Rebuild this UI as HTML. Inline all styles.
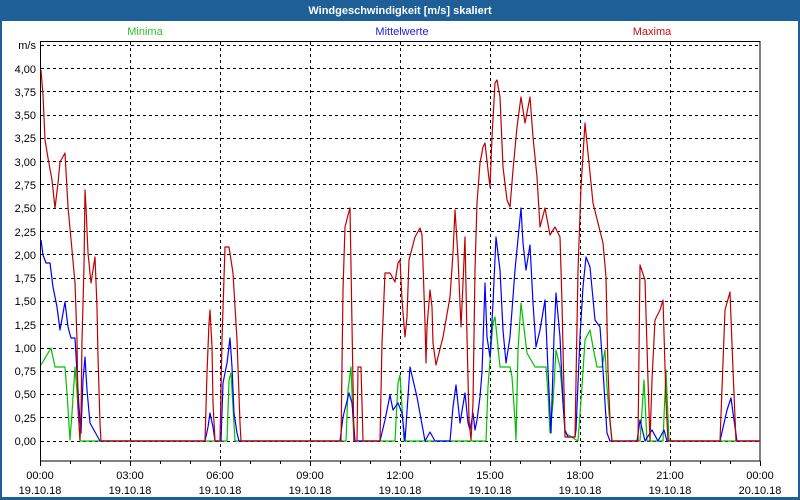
<!DOCTYPE html>
<html><head><meta charset="utf-8"><style>
html,body{margin:0;padding:0;width:800px;height:500px;overflow:hidden;background:#fff;}
svg{display:block}
text{font-family:"Liberation Sans",sans-serif;font-size:11px;}
</style></head><body>
<svg width="800" height="500" viewBox="0 0 800 500">
<rect x="0" y="0" width="800" height="500" fill="#1e5f97"/>
<rect x="2" y="21" width="796" height="476" fill="#fff"/>
<text x="400" y="14" fill="#fff" font-weight="bold" text-anchor="middle" style="font-size:11px">Windgeschwindigkeit [m/s] skaliert</text>
<text x="145" y="35" fill="#2ec02e" text-anchor="middle">Minima</text>
<text x="402" y="35" fill="#2020e0" text-anchor="middle">Mittelwerte</text>
<text x="652" y="35" fill="#c01010" text-anchor="middle">Maxima</text>
<g stroke="#000" stroke-width="1" stroke-dasharray="3,3" fill="none">
<path d="M41 45.5H760M41 68.5H760M41 91.5H760M41 115.5H760M41 138.5H760M41 161.5H760M41 184.5H760M41 208.5H760M41 231.5H760M41 254.5H760M41 278.5H760M41 301.5H760M41 324.5H760M41 348.5H760M41 371.5H760M41 394.5H760M41 417.5H760M41 441.5H760"/>
<path d="M130.5 42V461M220.5 42V461M310.5 42V461M400.5 42V461M490.5 42V461M580.5 42V461M670.5 42V461"/>
</g>
<rect x="40.5" y="41.5" width="719.5" height="419.5" fill="none" stroke="#000"/>
<g stroke="#000" fill="none">
<path d="M40.5 461V466M70.5 461V464M100.5 461V464M130.5 461V466M160.5 461V464M190.5 461V464M220.5 461V466M250.5 461V464M280.5 461V464M310.5 461V466M340.5 461V464M370.5 461V464M400.5 461V466M430.5 461V464M460.5 461V464M490.5 461V466M520.5 461V464M550.5 461V464M580.5 461V466M610.5 461V464M640.5 461V464M670.5 461V466M700.5 461V464M730.5 461V464M760.5 461V466"/>
</g>
<g fill="#000" text-anchor="end">
<text x="36" y="49">m/s</text>
<text x="36" y="73">4,00</text><text x="36" y="96">3,75</text><text x="36" y="119">3,50</text><text x="36" y="142">3,25</text><text x="36" y="166">3,00</text><text x="36" y="189">2,75</text><text x="36" y="212">2,50</text><text x="36" y="236">2,25</text><text x="36" y="259">2,00</text><text x="36" y="282">1,75</text><text x="36" y="305">1,50</text><text x="36" y="329">1,25</text><text x="36" y="352">1,00</text><text x="36" y="375">0,75</text><text x="36" y="398">0,50</text><text x="36" y="422">0,25</text><text x="36" y="445">0,00</text>
</g>
<g fill="#000" text-anchor="middle">
<text x="40" y="479">00:00</text><text x="40" y="494">19.10.18</text>
<text x="130" y="479">03:00</text><text x="130" y="494">19.10.18</text>
<text x="220" y="479">06:00</text><text x="220" y="494">19.10.18</text>
<text x="310" y="479">09:00</text><text x="310" y="494">19.10.18</text>
<text x="400" y="479">12:00</text><text x="400" y="494">19.10.18</text>
<text x="490" y="479">15:00</text><text x="490" y="494">19.10.18</text>
<text x="580" y="479">18:00</text><text x="580" y="494">19.10.18</text>
<text x="670" y="479">21:00</text><text x="670" y="494">19.10.18</text>
<text x="760" y="479">00:00</text><text x="760" y="494">20.10.18</text>
</g>
<g fill="none" stroke-width="1.2" stroke-linejoin="round">
<polyline stroke="#00c000" points="41,365 51,348 55,367 65,367 67,393 70,440 72,413 75,367 77,393 80,441 227,441 229,380 231,373 233,407 235,441 346,441 348,390 351,367 353,420 354,441 395,441 398,383 400,375 403,423 404,441 486,441 488,387 490,360 493,323 495,317 498,347 500,367 510,367 512,377 515,420 516,440 518,350 521,303 523,320 527,353 535,367 546,367 548,393 550,433 553,403 556,350 560,367 563,403 565,433 578,441 582,387 585,340 590,330 593,347 597,367 602,367 605,350 607,387 609,413 612,441 640,441 644,380 647,441 663,441 666,370 669,441 760,441"/>
<polyline stroke="#0000ff" points="41,240 43,255 46,263 50,263 53,287 57,307 60,330 65,302 68,327 71,338 75,338 77,373 79,407 81,433 83,380 85,357 87,390 90,423 95,432 100,441 205,441 208,427 210,413 213,427 215,441 221,441 223,383 227,363 230,338 232,367 234,413 237,433 239,441 340,441 343,417 349,393 352,403 354,427 355,441 380,441 385,420 390,395 393,410 398,403 402,413 405,441 410,367 417,397 425,441 430,432 435,441 450,441 453,407 456,385 460,423 465,393 468,423 470,430 473,413 475,430 477,420 480,397 482,372 485,283 487,337 490,357 493,303 496,237 500,270 503,330 506,363 510,337 515,270 521,208 523,243 526,270 530,245 533,303 536,347 540,330 545,300 548,370 551,433 554,337 556,293 560,337 563,403 565,430 568,437 575,437 576,430 580,337 583,287 586,257 590,267 595,320 600,327 603,370 605,403 607,433 610,441 637,441 640,420 645,441 652,430 658,441 664,430 667,441 720,441 727,410 731,398 734,420 737,441 760,441"/>
<polyline stroke="#c00000" points="41,70 43,95 45,140 48,158 52,180 55,208 58,183 60,162 65,153 68,207 72,250 75,283 77,340 78,407 80,440 81,417 82,340 84,267 85,190 86,207 88,253 91,283 95,257 97,307 98,357 100,423 101,441 205,441 207,373 209,323 210,310 212,347 213,403 215,441 220,441 222,340 225,247 229,247 233,273 237,340 240,423 241,441 341,441 343,290 345,227 348,215 350,208 352,325 354,441 357,441 358,367 361,367 363,441 380,441 382,343 385,273 390,273 395,282 398,263 400,260 402,300 405,337 407,317 409,260 415,237 420,228 422,235 425,323 426,363 427,327 430,290 432,307 433,343 436,365 443,337 450,297 453,253 455,210 458,257 461,327 463,283 465,237 467,337 469,420 471,440 473,403 475,270 477,203 480,163 483,147 485,143 488,170 490,187 492,137 495,83 497,80 500,97 503,167 507,200 510,207 513,170 517,127 521,97 525,123 530,97 533,137 537,177 540,227 545,208 550,235 555,227 560,237 562,303 565,437 575,437 578,270 581,187 585,123 588,153 593,203 603,243 606,277 608,370 610,420 612,441 638,441 640,265 645,280 648,380 650,441 652,380 655,320 660,310 663,300 666,400 668,441 720,441 725,310 730,292 733,370 736,441 760,441"/>
</g>
</svg>
</body></html>
